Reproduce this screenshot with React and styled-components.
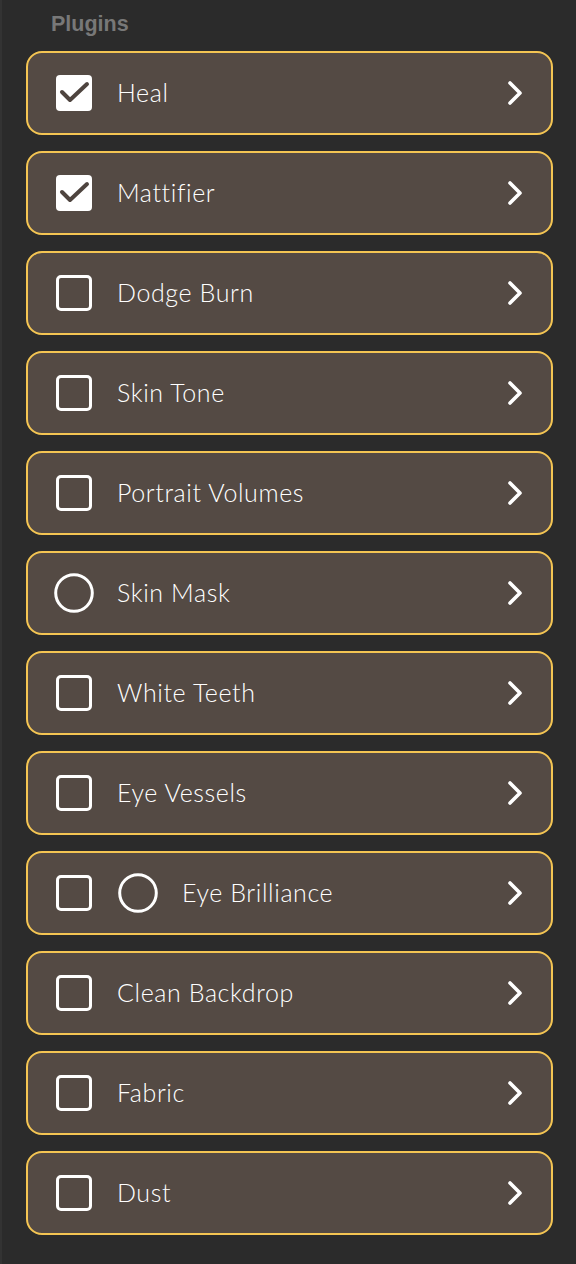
import React from "react";
import styled, { createGlobalStyle } from "styled-components";

const Global = createGlobalStyle`
  html, body { margin: 0; padding: 0; background: #2b2b2b; }
  body { font-family: "Lato", "Noto Sans", sans-serif; }
`;

const Panel = styled.div`
  box-sizing: border-box;
  min-height: 1264px;
  background: #2b2b2b;
  border-left: 2px solid #333333;
  padding: 12px 23px 29px 24px;
`;

const Header = styled.h2`
  margin: 0 0 15px 25px;
  font-family: "Liberation Sans", Arial, sans-serif;
  font-weight: 700;
  font-size: 21.5px;
  line-height: 24px;
  color: #787878;
`;

const List = styled.div`
  display: flex;
  flex-direction: column;
  gap: 16px;
`;

const Row = styled.div`
  box-sizing: border-box;
  height: 84px;
  display: flex;
  align-items: center;
  gap: 25px;
  padding: 0 27px 0 28px;
  background: #544a44;
  border: 2px solid #f4c553;
  border-radius: 16px;
  color: #ffffff;
`;

const Label = styled.span`
  flex: 1;
  font-size: 25px;
  font-weight: 300;
  letter-spacing: 0.6px;
  line-height: 30px;
  padding-bottom: 3px;
`;

const Slot = styled.span`
  display: flex;
  align-items: center;
  justify-content: center;
  width: 36px;
  height: 36px;
  flex: none;
`;

const CheckBox = ({ checked }) => (
  <Slot>
    <svg width="36" height="36" viewBox="0 0 36 36">
      {checked ? (
        <>
          <rect x="0" y="0" width="36" height="36" rx="4" fill="#ffffff" />
          <path
            d="M6 17 L14 25 L31 9"
            fill="none"
            stroke="#4e443f"
            strokeWidth="4"
            strokeLinecap="round"
            strokeLinejoin="round"
          />
        </>
      ) : (
        <rect x="1.5" y="1.5" width="33" height="33" rx="3.5" fill="none" stroke="#ffffff" strokeWidth="3" />
      )}
    </svg>
  </Slot>
);

const CircleSlot = styled(Slot)`
  width: 40px;
  height: 40px;
  margin: ${(p) => (p.$inner ? "0 -1px 0 1px" : "0 -2px 0 -2px")};
`;

const Circle = ({ inner }) => (
  <CircleSlot $inner={inner}>
    <svg width="40" height="40" viewBox="0 0 40 40">
      <circle cx="20" cy="20" r="18.3" fill="none" stroke="#ffffff" strokeWidth="3" />
    </svg>
  </CircleSlot>
);

const ChevronIcon = styled.svg`
  flex: none;
  margin-bottom: 1px;
`;

const Chevron = () => (
  <ChevronIcon width="18" height="26" viewBox="0 0 18 26">
    <path
      d="M4 3 L14 13 L4 23"
      fill="none"
      stroke="#ffffff"
      strokeWidth="3.6"
      strokeLinecap="round"
      strokeLinejoin="round"
    />
  </ChevronIcon>
);

const items = [
  { name: "Heal", icons: ["checked"] },
  { name: "Mattifier", icons: ["checked"] },
  { name: "Dodge Burn", icons: ["box"] },
  { name: "Skin Tone", icons: ["box"] },
  { name: "Portrait Volumes", icons: ["box"] },
  { name: "Skin Mask", icons: ["circle"] },
  { name: "White Teeth", icons: ["box"] },
  { name: "Eye Vessels", icons: ["box"] },
  { name: "Eye Brilliance", icons: ["box", "circle"] },
  { name: "Clean Backdrop", icons: ["box"] },
  { name: "Fabric", icons: ["box"] },
  { name: "Dust", icons: ["box"] },
];

export default function App() {
  return (
    <>
      <Global />
      <Panel>
        <Header>Plugins</Header>
        <List>
          {items.map((it) => (
            <Row key={it.name}>
              {it.icons.map((ic, i) =>
                ic === "circle" ? (
                  <Circle key={i} inner={i > 0} />
                ) : (
                  <CheckBox key={i} checked={ic === "checked"} />
                )
              )}
              <Label>{it.name}</Label>
              <Chevron />
            </Row>
          ))}
        </List>
      </Panel>
    </>
  );
}
